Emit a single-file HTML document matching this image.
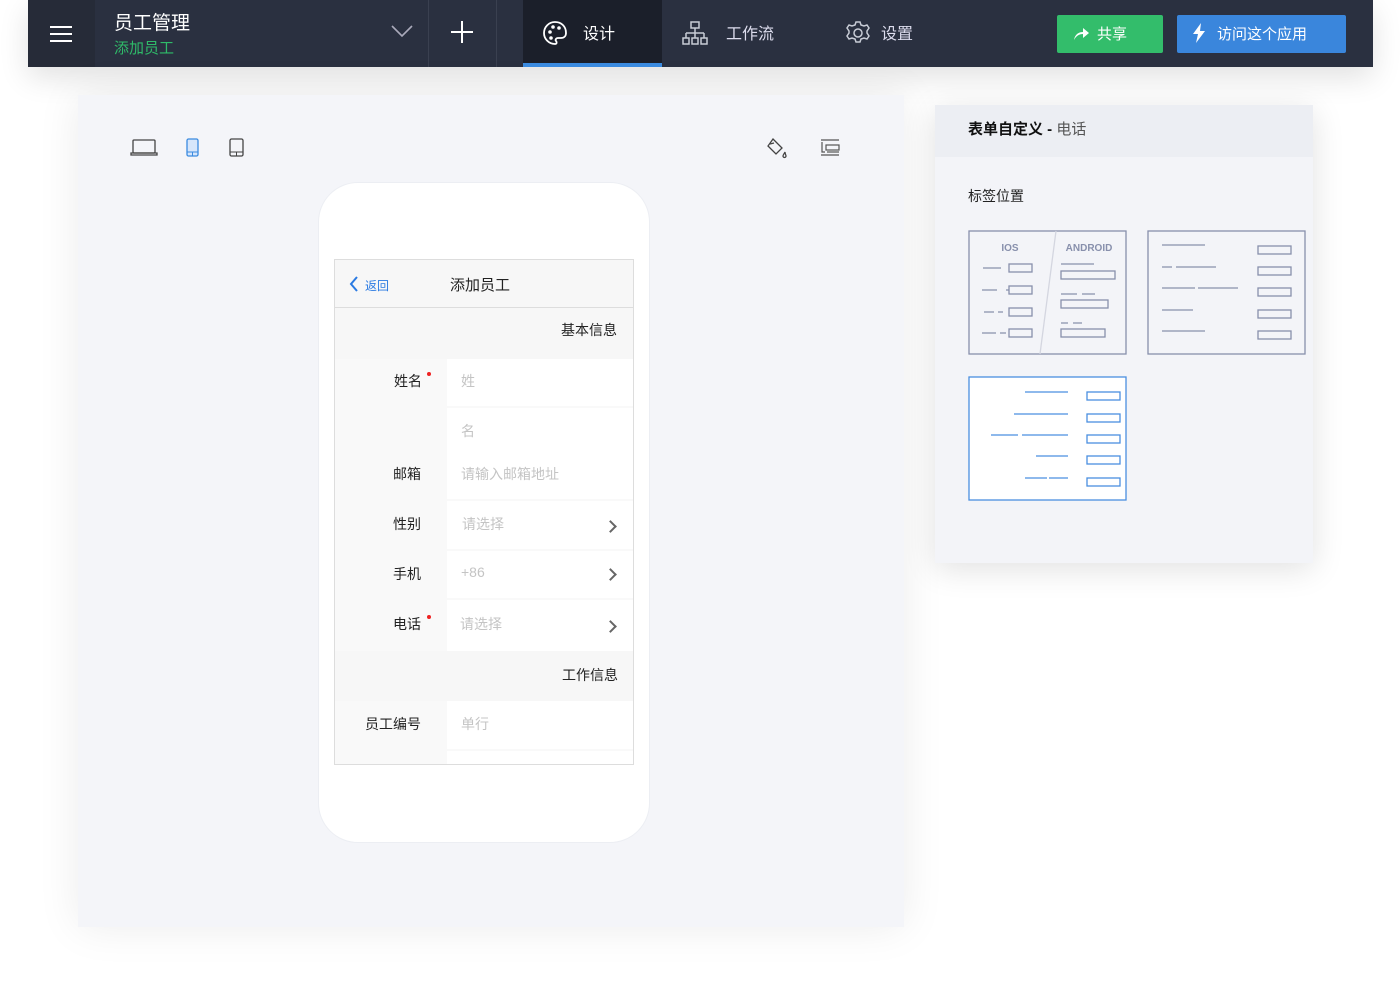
<!DOCTYPE html>
<html><head><meta charset="utf-8"><style>
*{margin:0;padding:0;box-sizing:border-box}
body{width:1400px;height:1000px;background:#fff;position:relative;overflow:hidden;font-family:"Liberation Sans","Noto Sans CJK SC",sans-serif}
.a{position:absolute}
.top{left:28px;top:0;width:1345px;height:67px;background:#2a3040;box-shadow:0 10px 30px rgba(0,0,0,.12)}
.t{color:#fff;white-space:nowrap}
.lbl{position:absolute;font-size:14px;color:#222;text-align:right;width:90px}
.ph{position:absolute;font-size:14px;color:#c4c4c4}
.chev{position:absolute;width:9px;height:9px;border-right:2px solid #666;border-top:2px solid #666;transform:rotate(45deg)}
</style></head><body>
<div class="a top">
 <div class="a" style="left:0;top:0;width:67px;height:67px;background:#262b38"></div>
 <div class="a" style="left:22px;top:26px;width:22px;height:2px;background:#fff;box-shadow:0 7px 0 #fff,0 14px 0 #fff"></div>
 <div class="a t" style="left:86px;top:8px;font-size:19px">员工管理</div>
 <div class="a" style="left:86px;top:37px;font-size:15px;color:#2fbb69;white-space:nowrap">添加员工</div>
 <svg class="a" style="left:363px;top:24px" width="22" height="14"><path d="M1 2l10 10 10-10" stroke="#aab" stroke-width="1.6" fill="none"/></svg>
 <div class="a" style="left:400px;top:0;width:1px;height:67px;background:#3a4050"></div>
 <div class="a" style="left:468px;top:0;width:1px;height:67px;background:#3a4050"></div>
 <div class="a" style="left:423px;top:31px;width:22px;height:2px;background:#fff"></div>
 <div class="a" style="left:433px;top:21px;width:2px;height:22px;background:#fff"></div>
 <div class="a" style="left:495px;top:0;width:139px;height:67px;background:#1b1f2a"></div>
 <div class="a" style="left:495px;top:63px;width:139px;height:4px;background:#3b8be0"></div>
 <svg class="a" style="left:514px;top:20px" width="26" height="26" viewBox="0 0 26 26"><path d="M13 2a11 11 0 1 0 0 22c2 0 2-2 1-3s0-3 2-3h3c3 0 5-2 5-5C24 6 19 2 13 2z" stroke="#fff" stroke-width="1.8" fill="none"/><circle cx="8" cy="12" r="1.8" fill="#fff"/><circle cx="11" cy="7" r="1.8" fill="#fff"/><circle cx="17" cy="8" r="1.8" fill="#fff"/><circle cx="9" cy="18" r="1.8" fill="#fff"/></svg>
 <div class="a t" style="left:555px;top:20px;font-size:16px">设计</div>
 <svg class="a" style="left:654px;top:20px" width="26" height="26" viewBox="0 0 26 26" fill="none" stroke="#c8ccd6" stroke-width="1.5"><rect x="9" y="2" width="8" height="6"/><path d="M13 8v5M4 13h18M4 13v5M13 13v5M22 13v5"/><rect x="1" y="18" width="6" height="6"/><rect x="10" y="18" width="6" height="6"/><rect x="19" y="18" width="6" height="6"/></svg>
 <div class="a t" style="left:698px;top:20px;font-size:16px;color:#dde">工作流</div>
 <svg class="a" style="left:817px;top:20px" width="26" height="26" viewBox="0 0 26 26" fill="none" stroke="#c8ccd6" stroke-width="1.5"><path d="M11 2h4l1 3 3 1 3-1 2 3-2 3v2l2 3-2 3-3-1-3 1-1 3h-4l-1-3-3-1-3 1-2-3 2-3v-2l-2-3 2-3 3 1 3-1z"/><circle cx="13" cy="13" r="4"/></svg>
 <div class="a t" style="left:853px;top:20px;font-size:16px;color:#dde">设置</div>
 <div class="a" style="left:1029px;top:15px;width:106px;height:38px;background:#33bd6b;border-radius:2px"></div>
 <svg class="a" style="left:1044px;top:25px" width="18" height="16" viewBox="0 0 18 16"><path d="M2 15c1-6 5-8 9-8V3l6 5-6 5V9c-4 0-7 2-9 6z" fill="#fff"/></svg>
 <div class="a t" style="left:1069px;top:23px;font-size:15px">共享</div>
 <div class="a" style="left:1149px;top:15px;width:169px;height:38px;background:#3a86dc;border-radius:2px"></div>
 <svg class="a" style="left:1164px;top:23px" width="14" height="20" viewBox="0 0 14 20"><path d="M9 0L1 11h5l-2 9 9-12H8z" fill="#fff"/></svg>
 <div class="a t" style="left:1189px;top:23px;font-size:15px">访问这个应用</div>
</div>

<div class="a" style="left:78px;top:95px;width:826px;height:832px;background:#f4f5f9;box-shadow:0 0 40px rgba(0,0,0,.08)">
 <svg class="a" style="left:52px;top:44px" width="28" height="18" viewBox="0 0 28 18" fill="none" stroke="#444" stroke-width="1.3"><rect x="3" y="1" width="22" height="13" rx="1"/><path d="M1 14h26v2H1z"/></svg>
 <svg class="a" style="left:108px;top:43px" width="14" height="20" viewBox="0 0 14 20"><rect x="1" y="1" width="11" height="17" rx="1.5" fill="#d6e6fb" stroke="#3b8be0" stroke-width="1.3"/><path d="M1 14h11M6.5 14v4" stroke="#3b8be0"/></svg>
 <svg class="a" style="left:151px;top:43px" width="16" height="20" viewBox="0 0 16 20"><rect x="1" y="1" width="13" height="17" rx="1.5" fill="none" stroke="#444" stroke-width="1.3"/><path d="M1 14h13M7.5 14v4" stroke="#444"/></svg>
 <svg class="a" style="left:688px;top:42px" width="24" height="24" viewBox="0 0 24 24" fill="none" stroke="#444" stroke-width="1.3"><path d="M7 2l9 9-6 6-8-8z"/><path d="M4 7l4-1"/><path d="M19 15c-1 2-2 3-2 4a1.5 1.5 0 0 0 3 0c0-1-1-2-1-4z"/></svg>
 <svg class="a" style="left:740px;top:44px" width="22" height="18" viewBox="0 0 22 18" fill="none" stroke="#555" stroke-width="1.2"><path d="M3 1h18M3 16h18M4 3v10h3"/><rect x="8" y="6" width="13" height="5"/><path d="M9 13h12" /></svg>

 <div class="a" style="left:240px;top:87px;width:332px;height:661px;background:#fff;border-radius:40px;border:1px solid #eceef3"></div>
 <div class="a" style="left:256px;top:164px;width:300px;height:506px;border:1px solid #ddd;background:#f9f9f9;overflow:hidden">
  <div class="a" style="left:0;top:0;width:300px;height:48px;background:#f7f7f7;border-bottom:1px solid #ddd"></div>
  <svg class="a" style="left:14px;top:16px" width="10" height="16"><path d="M8 1L2 8l6 7" stroke="#2a7ae2" stroke-width="2" fill="none"/></svg>
  <div class="a" style="left:30px;top:17px;font-size:12px;color:#2a7ae2">返回</div>
  <div class="a" style="left:115px;top:14px;font-size:15px;color:#222">添加员工</div>
  <div class="a" style="left:0;top:48px;width:300px;height:51px;background:#f7f7f7"></div>
  <div class="a" style="left:226px;top:60px;font-size:14px;color:#222">基本信息</div>
  <div class="a" style="left:112px;top:99px;width:188px;height:47px;background:#fff"></div>
  <div class="a" style="left:112px;top:148px;width:188px;height:91px;background:#fff"></div>
  <div class="a" style="left:112px;top:241px;width:188px;height:48px;background:#fff"></div>
  <div class="a" style="left:112px;top:291px;width:188px;height:47px;background:#fff"></div>
  <div class="a" style="left:112px;top:340px;width:188px;height:51px;background:#fff"></div>
  <div class="a" style="left:0;top:391px;width:300px;height:50px;background:#f7f7f7"></div>
  <div class="a" style="left:112px;top:441px;width:188px;height:48px;background:#fff"></div>
  <div class="a" style="left:112px;top:491px;width:188px;height:20px;background:#fff"></div>
  <div class="lbl" style="left:-3px;top:111px">姓名</div><div class="a" style="left:92px;top:112px;width:4px;height:4px;border-radius:2px;background:#e22"></div>
  <div class="ph" style="left:126px;top:111px">姓</div>
  <div class="ph" style="left:126px;top:161px">名</div>
  <div class="lbl" style="left:-4px;top:204px">邮箱</div>
  <div class="ph" style="left:126px;top:204px">请输入邮箱地址</div>
  <div class="lbl" style="left:-4px;top:254px">性别</div>
  <div class="ph" style="left:127px;top:254px">请选择</div><div class="chev" style="left:271px;top:262px"></div>
  <div class="lbl" style="left:-4px;top:304px">手机</div>
  <div class="ph" style="left:126px;top:304px">+86</div><div class="chev" style="left:271px;top:310px"></div>
  <div class="lbl" style="left:-4px;top:354px">电话</div><div class="a" style="left:92px;top:355px;width:4px;height:4px;border-radius:2px;background:#e22"></div>
  <div class="ph" style="left:125px;top:354px">请选择</div><div class="chev" style="left:271px;top:362px"></div>
  <div class="a" style="left:227px;top:405px;font-size:14px;color:#222">工作信息</div>
  <div class="lbl" style="left:-4px;top:454px">员工编号</div>
  <div class="ph" style="left:126px;top:454px">单行</div>
 </div>
</div>

<div class="a" style="left:935px;top:105px;width:378px;height:458px;background:#f3f4f8;box-shadow:0 6px 30px rgba(0,0,0,.12)">
 <div class="a" style="left:0;top:0;width:378px;height:52px;background:#eceef3"></div>
 <div class="a" style="left:33px;top:13px;font-size:15px;color:#111;font-weight:bold;white-space:nowrap">表单自定义 - <span style="font-weight:normal;color:#555">电话</span></div>
 <div class="a" style="left:33px;top:81px;font-size:14px;color:#222">标签位置</div>
 <svg class="a" style="left:33px;top:125px" width="345" height="272" viewBox="0 0 345 272" fill="none">
  <g stroke="#8890ac" stroke-width="1.3">
   <rect x="1" y="1" width="157" height="123"/>
   <path d="M88 1L72 124" stroke="#d4d6e0"/>
   <path d="M15 38h18M14 60h15M38 60h3M16 82h10M30 82h5M14 103h14M32 103h6"/>
   <rect x="41" y="34" width="23" height="8"/><rect x="41" y="56" width="23" height="8"/><rect x="41" y="78" width="23" height="8"/><rect x="41" y="99" width="23" height="8"/>
   <path d="M93 34h33M93 64h16M114 64h13M93 93h7M105 93h9"/>
   <rect x="93" y="41" width="54" height="8"/><rect x="93" y="70" width="47" height="8"/><rect x="93" y="99" width="44" height="8"/>
   <rect x="180" y="1" width="157" height="123"/>
   <path d="M194 15h43M194 37h10M208 37h40M194 58h33M230 58h40M194 80h31M194 101h43"/>
   <rect x="290" y="16" width="33" height="8"/><rect x="290" y="37" width="33" height="8"/><rect x="290" y="58" width="33" height="8"/><rect x="290" y="80" width="33" height="8"/><rect x="290" y="101" width="33" height="8"/>
  </g>
  <rect x="1" y="147" width="157" height="123" fill="#fff" stroke="#4a8fe0" stroke-width="1.3"/>
  <g stroke="#4a8fe0" stroke-width="1.3">
   <path d="M57 162h43M46 184h54M23 205h27M54 205h46M68 226h32M57 248h22M81 248h19"/>
   <rect x="119" y="162" width="33" height="8"/><rect x="119" y="184" width="33" height="8"/><rect x="119" y="205" width="33" height="8"/><rect x="119" y="226" width="33" height="8"/><rect x="119" y="248" width="33" height="8"/>
  </g>
  <text x="42" y="21" font-size="10" font-weight="bold" fill="#8890ac" text-anchor="middle" font-family="Liberation Sans">IOS</text>
  <text x="121" y="21" font-size="10" font-weight="bold" fill="#8890ac" text-anchor="middle" font-family="Liberation Sans">ANDROID</text>
 </svg>
</div>
</body></html>
